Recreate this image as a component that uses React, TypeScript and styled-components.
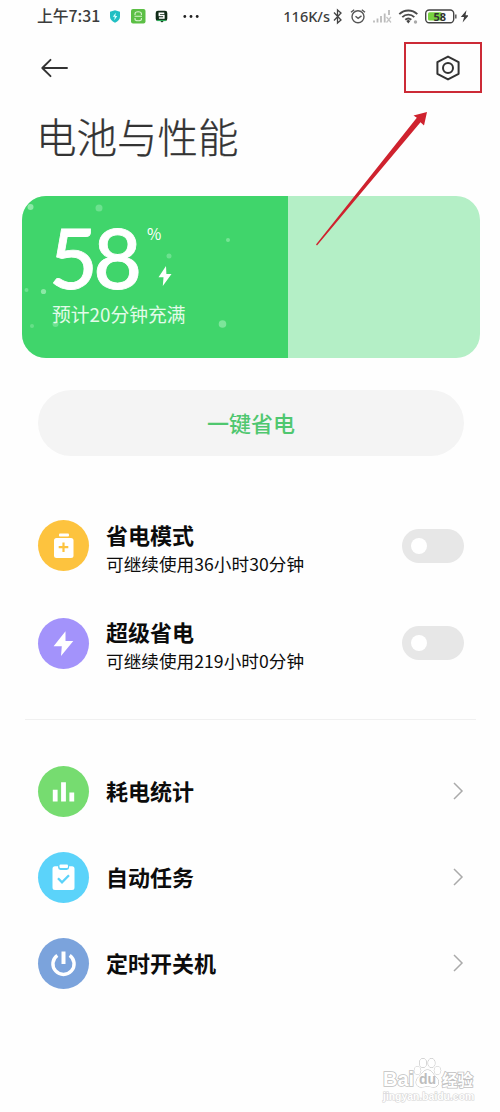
import React from "react";
import styled, { createGlobalStyle } from "styled-components";

const GlobalStyle = createGlobalStyle`
  * { box-sizing: border-box; }
  body {
    margin: 0;
    background: #fefefe;
    color: #0c0c0c;
    font-family: "Noto Sans CJK SC", "Noto Sans", sans-serif;
  }
`;

const Screen = styled.main`
  position: relative;
  width: 500px;
  height: 1112px;
  overflow: hidden;
  display: flex;
  flex-direction: column;
`;

const StatusBar = styled.div`
  height: 31px;
  padding: 0 32px 0 37px;
  display: flex;
  align-items: center;
  justify-content: space-between;
  color: #3c3c3c;
`;

const StatusGroup = styled.div<{ $gap: number }>`
  display: flex;
  align-items: center;
  gap: ${(p) => p.$gap}px;
  svg { display: block; flex: none; }
`;

const Clock = styled.span`
  font-size: 15.8px;
  line-height: 20px;
  font-weight: 500;
  margin-right: 1px;
  white-space: nowrap;
`;

const Speed = styled.span`
  font-family: "Noto Sans", sans-serif;
  font-size: 14.5px;
  line-height: 20px;
  font-weight: 500;
  margin-right: 2px;
`;

const Header = styled.header`
  height: 72px;
  padding: 11px 18px 0 40px;
  display: flex;
  align-items: flex-start;
  justify-content: space-between;
`;

const BackButton = styled.button`
  border: 0;
  padding: 0;
  margin-top: 14px;
  background: none;
  svg { display: block; }
`;

const SettingsFrame = styled.button`
  width: 78px;
  height: 51px;
  padding: 0 0 0 9px;
  border: 2px solid #cc2a36;
  background: none;
  display: flex;
  align-items: center;
  justify-content: center;
`;

const Title = styled.h1`
  margin: 0 0 0 36px;
  height: 64px;
  line-height: 66px;
  font-size: 40.5px;
  font-weight: 300;
  color: #333;
  -webkit-text-stroke: 0.3px #333;
`;

const BatteryCard = styled.section`
  position: relative;
  margin: 29px 20px 0 22px;
  height: 162px;
  border-radius: 24px;
  overflow: hidden;
  background: #b4efc6;
  display: flex;
`;

const BatteryFill = styled.div`
  width: 266px;
  background: #40d56b;
  padding: 26px 0 0 30px;
  color: #fff;
`;

const Bubbles = styled.svg`
  position: absolute;
  left: 0;
  top: 0;
`;

const LevelRow = styled.div`
  position: relative;
  display: flex;
  height: 74px;
`;

const Level = styled.span`
  width: 93px;
  font-family: Lato, sans-serif;
  font-size: 84px;
  line-height: 69px;
  font-weight: 500;
  letter-spacing: -4.5px;
  margin-left: -3px;
  -webkit-text-stroke: 0.8px #fff;
`;

const LevelSide = styled.div`
  display: flex;
  flex-direction: column;
  padding: 1px 0 0 5px;
  svg { margin: 23px 0 0 11px; }
`;

const Percent = styled.span`
  font-size: 15.5px;
  line-height: 20px;
`;

const Estimate = styled.div`
  position: relative;
  margin-top: 4px;
  font-size: 18.8px;
  line-height: 28px;
  color: #e2fbe9;
`;

const SaveButton = styled.button`
  margin: 32px 36px 0 38px;
  height: 66px;
  padding: 0 0 2px 0;
  border: 0;
  border-radius: 33px;
  background: #f4f4f4;
  color: #4fc76f;
  font: 500 22px/64px "Noto Sans CJK SC", sans-serif;
`;

const List = styled.div<{ $top: number }>`
  padding: ${(p) => p.$top}px 36px 0 38px;
`;

const Row = styled.div<{ $height: number }>`
  height: ${(p) => p.$height}px;
  display: flex;
  align-items: center;
`;

const IconDisc = styled.div<{ $color: string }>`
  width: 51px;
  height: 51px;
  flex: none;
  border-radius: 50%;
  background: ${(p) => p.$color};
  svg { display: block; }
`;

const RowText = styled.div<{ $shift: number }>`
  flex: 1;
  margin-left: 17px;
  padding-top: ${(p) => Math.max(p.$shift, 0)}px;
  padding-bottom: ${(p) => Math.max(-p.$shift, 0)}px;
`;

const RowTitle = styled.div`
  font-size: 22px;
  line-height: 30px;
  font-weight: 700;
`;

const RowNote = styled.div`
  font-size: 17.6px;
  line-height: 29px;
  letter-spacing: 0.05px;
`;

const Toggle = styled.span`
  width: 62px;
  height: 34px;
  padding: 9px;
  border-radius: 17px;
  background: #e7e7e7;
  &::before {
    content: "";
    display: block;
    width: 16px;
    height: 16px;
    border-radius: 50%;
    background: #fff;
  }
`;

const Divider = styled.hr`
  width: 451px;
  height: 1px;
  margin: 27px 0 0 25px;
  border: 0;
  background: #f0f0f0;
`;

const Pointer = styled.svg`
  position: absolute;
  left: 310px;
  top: 105px;
`;

const Watermark = styled.div`
  position: absolute;
  left: 383px;
  top: 1057px;
  width: 92px;
  height: 48px;
  color: #fff;
  -webkit-text-stroke: 1.6px #c0c0c0;
  paint-order: stroke fill;
  svg { position: absolute; left: 30px; top: 0; }
`;

const Brand = styled.div`
  display: flex;
  height: 34px;
  padding-top: 11px;
  font: 700 20px/23px "Liberation Sans", sans-serif;
`;

const BrandBai = styled.span`
  width: 31px;
`;

const BrandDu = styled.span`
  position: relative;
  z-index: 1;
  width: 28px;
  padding-left: 5px;
  font-size: 14px;
  color: #bdbdbd;
  -webkit-text-stroke: 0;
`;

const BrandCn = styled.span`
  font: 700 15.5px/22px "Noto Sans CJK SC", sans-serif;
`;

const Site = styled.div`
  font: 700 10.4px/12px "Liberation Sans", sans-serif;
  -webkit-text-stroke: 1.2px #d4d4d4;
`;

const modes = [
  {
    title: "省电模式",
    note: "可继续使用36小时30分钟",
    color: "#fdc33e",
    icon: (
      <>
        <rect x="21" y="13.5" width="10" height="3" rx="1" fill="#fff" />
        <rect x="16" y="18" width="19.5" height="20" rx="2.5" fill="#fff" />
        <path d="M25.5 22.5v9.5M20.7 27.2h9.6" stroke="#fdc33e" strokeWidth="2.2" />
      </>
    ),
  },
  {
    title: "超级省电",
    note: "可继续使用219小时0分钟",
    color: "#a393fb",
    icon: <path d="M27.5 13.2 15.6 28.3h8.2l-.8 9.7L35.3 23h-7.8z" fill="#fff" />,
  },
];

const links = [
  {
    title: "耗电统计",
    color: "#76dc70",
    icon: (
      <path
        d="M17.2 23.8v11.6M25.5 16.2v19.2M33.8 26.5v8.9"
        stroke="#fff"
        strokeWidth="4.8"
      />
    ),
  },
  {
    title: "自动任务",
    color: "#5bd3fa",
    icon: (
      <>
        <path
          d="M17 14.2h3.1v1.4q0 2.4 2.4 2.4h6.2q2.4 0 2.4-2.4v-1.4H34q2.5 0 2.5 2.5v18.800q0 2.500-2.500 2.500H17q-2.500 0-2.500-2.500V16.700q0-2.500 2.500-2.500z"
          fill="#fff"
        />
        <rect x="21.500" y="12.500" width="8.500" height="3.500" rx="1" fill="#fff" />
        <path d="m20 26.300 4 4 7-7" fill="none" stroke="#5bd3fa" strokeWidth="2.300" />
      </>
    ),
  },
  {
    title: "定时开关机",
    color: "#7ba3dc",
    icon: (
      <>
        <path
          d="M19.300 17.300a10.600 10.600 0 1 0 12.400 0"
          fill="none"
          stroke="#fff"
          strokeWidth="3.400"
        />
        <path d="M25.500 13.500v12.500" stroke="#fff" strokeWidth="4" />
      </>
    ),
  },
];

const Disc = ({ color, children }: { color: string; children: React.ReactNode }) => (
  <IconDisc $color={color}>
    <svg width="51" height="51" viewBox="0 0 51 51">{children}</svg>
  </IconDisc>
);

const StatusIcons = () => (
  <StatusGroup $gap={0}>
    <Speed>116K/s</Speed>
    <svg width="136" height="22" viewBox="332 4 136 22" fill="none">
      <path d="m334 11.500 7 7.500-3.500 3V9l3.500 3-7 7.500" stroke="#444" strokeWidth="1.300" />
      <circle cx="358" cy="15.800" r="6" stroke="#555" strokeWidth="1.400" />
      <path d="m351 11.300 3.200-2.600m10.800 2.600-3.200-2.600m-6.300 6.600 2.600 2 3.400-2.400" stroke="#555" strokeWidth="1.400" />
      <path d="M374 21.500v-2M377.500 21.500v-4M381 21.500V15M384.700 21.500v-9M389 14V9" stroke="#bbb" strokeWidth="1.800" />
      <path d="m386.500 16 4.500 5.500m0-5.500-4.500 5.500" stroke="#c4c4c4" strokeWidth="1.200" />
      <path d="M399.300 13.100a13 13 0 0 1 18 0M402.300 16.100a8.600 8.600 0 0 1 12 0M405.300 18.700a4.600 4.600 0 0 1 6 0" stroke="#4a4a4a" strokeWidth="1.900" />
      <path d="m406.300 20 2-1.200 2 1.200-2 2.400z" fill="#444" />
      <circle cx="415.500" cy="21" r="1.700" fill="#aaa" />
      <rect x="425.700" y="9" width="28" height="12.800" rx="3.500" stroke="#444" strokeWidth="1.400" />
      <rect x="428" y="11.200" width="14" height="8.400" rx="1.500" fill="#77d23f" />
      <path d="M455.800 13.500v4" stroke="#666" strokeWidth="1.600" />
      <text x="439.700" y="19.500" textAnchor="middle" fontFamily="Noto Sans, sans-serif" fontSize="11" fontWeight="700" fill="#333">58</text>
      <path d="m466.500 9.300-5.700 6.700h3.300l-1.500 5.500 6.300-7.200h-3.400z" fill="#3e3e3e" />
    </svg>
  </StatusGroup>
);

const AppBadges = () => (
  <svg width="96" height="18" viewBox="108 6 96 18">
    <path d="m115 9.300 5 1.500v5q0 3.600-5 6-5-2.400-5-6v-5z" fill="#21bfc3" />
    <path d="m115.800 11.800-3 4h2l-.5 3.500 3-4.300h-2z" fill="#d9ffff" />
    <rect x="131" y="8" width="14.500" height="14.500" rx="2" fill="#5bbf45" />
    <path d="M135 14v-1.200q0-2 3.200-2t3.200 2V14M134.500 15.300h7.500M135 17v1.200q0 1.500 3.200 1.500t3.200-1.500V17" fill="none" stroke="#d8f3cf" strokeWidth="1.100" />
    <path d="M158 9.800h7q2.300 0 2.300 2.300v5.700q0 2.300-2.300 2.300h-1.300l-1.700 1.500-1.700-1.500H158q-2.300 0-2.300-2.300v-5.700q0-2.300 2.300-2.300z" fill="#102a16" />
    <path d="M157 19.500h9" stroke="#2fae5a" strokeWidth="1.200" />
    <path d="M164.300 12.200h-5v2.300h4.600v2.500h-5" fill="none" stroke="#fff" strokeWidth="1.500" />
    <circle cx="184.800" cy="15.500" r="1.400" fill="#222" />
    <circle cx="191" cy="15.500" r="1.400" fill="#222" />
    <circle cx="197.200" cy="15.500" r="1.400" fill="#222" />
  </svg>
);

export default function App() {
  return (
    <>
      <GlobalStyle />
      <Screen>
        <StatusBar>
          <StatusGroup $gap={7}>
            <Clock>上午7:31</Clock>
            <AppBadges />
          </StatusGroup>
          <StatusIcons />
        </StatusBar>

        <Header>
          <BackButton aria-label="返回">
            <svg width="30" height="24" viewBox="0 0 30 24" fill="none" stroke="#333" strokeWidth="1.900" strokeLinecap="round" strokeLinejoin="round">
              <path d="M27 12H2.500M10.500 3.800 2.300 12l8.200 8.200" />
            </svg>
          </BackButton>
          <SettingsFrame aria-label="设置">
            <svg width="28" height="28" viewBox="0 0 28 28" fill="none" stroke="#333" strokeWidth="2">
              <path d="M14 2.600 24.600 8.200v11.600L14 25.400 3.400 19.800V8.200z" strokeLinejoin="round" />
              <circle cx="14" cy="14" r="5" />
            </svg>
          </SettingsFrame>
        </Header>

        <Title>电池与性能</Title>

        <BatteryCard>
          <BatteryFill>
            <Bubbles width="266" height="162" fill="#8be9a6">
              <circle cx="8.500" cy="11" r="3" />
              <circle cx="77" cy="12" r="3.500" opacity=".6" />
              <circle cx="206" cy="44" r="2" opacity=".7" />
              <circle cx="147" cy="60" r="2.500" opacity=".6" />
              <circle cx="4.500" cy="94" r="2" opacity=".6" />
              <circle cx="21.500" cy="95.500" r="2.600" />
              <circle cx="10" cy="130" r="2" opacity=".5" />
              <circle cx="33.500" cy="128" r="3" opacity=".6" />
              <circle cx="200.500" cy="128" r="3.800" opacity=".8" />
            </Bubbles>
            <LevelRow>
              <Level>58</Level>
              <LevelSide>
                <Percent>%</Percent>
                <svg width="14" height="20" viewBox="0 0 14 20">
                  <path d="M8 0 .5 11.300h5L4.800 20l8.700-12H8.400z" fill="#fff" />
                </svg>
              </LevelSide>
            </LevelRow>
            <Estimate>预计20分钟充满</Estimate>
          </BatteryFill>
        </BatteryCard>

        <SaveButton>一键省电</SaveButton>

        <List $top={41}>
          {modes.map((m) => (
            <Row key={m.title} $height={97.5}>
              <Disc color={m.color}>{m.icon}</Disc>
              <RowText $shift={5}>
                <RowTitle>{m.title}</RowTitle>
                <RowNote>{m.note}</RowNote>
              </RowText>
              <Toggle />
            </Row>
          ))}
        </List>

        <Divider />

        <List $top={28}>
          {links.map((l) => (
            <Row key={l.title} $height={86}>
              <Disc color={l.color}>{l.icon}</Disc>
              <RowText $shift={-2}>
                <RowTitle>{l.title}</RowTitle>
              </RowText>
              <svg width="12" height="20" viewBox="0 0 12 20" fill="none" stroke="#aaa" strokeWidth="1.500">
                <path d="m2 2 8 8-8 8" />
              </svg>
            </Row>
          ))}
        </List>

        <Pointer width="122" height="145" viewBox="310 105 122 145">
          <path d="m316 244.500 100.800-126.700-3.300-2.200 13.500-3.600-3 13.500-3.500-3.200L317 245.500z" fill="#cf222e" />
        </Pointer>

        <Watermark>
          <svg width="30" height="32" viewBox="0 0 30 32" fill="#fff" stroke="#b8b8b8">
            <ellipse cx="4.500" cy="13.500" rx="3.200" ry="4" />
            <ellipse cx="10" cy="6" rx="3.400" ry="4.300" />
            <ellipse cx="18.500" cy="6" rx="3.400" ry="4.300" />
            <ellipse cx="24.500" cy="13.500" rx="3.200" ry="4" />
            <path d="M14.500 13c4.500 0 5 4 8.500 7s3.500 10-2 10c-3 0-4-.8-6.500-.8S10.500 30 8 30c-6 0-6-7-2.300-10S10 13 14.500 13z" />
          </svg>
          <Brand>
            <BrandBai>Bai</BrandBai>
            <BrandDu>du</BrandDu>
            <BrandCn>经验</BrandCn>
          </Brand>
          <Site>jingyan.baidu.com</Site>
        </Watermark>
      </Screen>
    </>
  );
}
